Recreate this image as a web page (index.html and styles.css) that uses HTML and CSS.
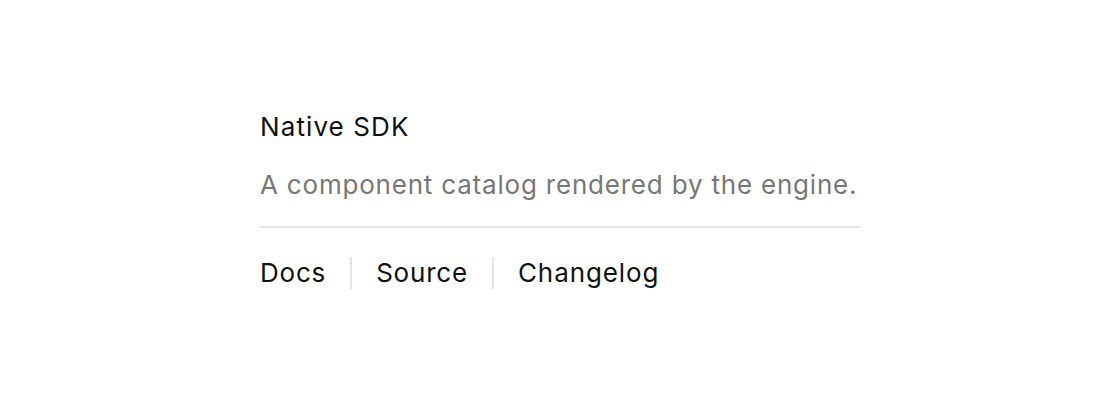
FILE: index.html
```html
<!DOCTYPE html>
<html lang="en">
<head>
    <meta charset="UTF-8">
    <meta name="viewport" content="width=device-width, initial-scale=1.0">
    <title>Native SDK</title>
    <link rel="stylesheet" href="styles.css">
</head>
<body>
    <div class="card">
        <h1 class="title">Native SDK</h1>
        <p class="subtitle">A component catalog rendered by the engine.</p>
        <nav class="links">
            <a href="#" class="link">Docs</a>
            <a href="#" class="link">Source</a>
            <a href="#" class="link">Changelog</a>
        </nav>
    </div>
</body>
</html>
```

FILE: styles.css
```css
body {
    font-family: Inter, "Noto Sans", sans-serif;
    display: flex;
    justify-content: center;
    align-items: center;
    height: 100vh;
    margin: 0;
    background-color: #fff;
    color: #111;
    letter-spacing: 0.8px;
}
.card {
    width: 600px;
}
.title {
    margin: 0;
    font-size: 26px;
    font-weight: 400;
    line-height: 32px;
    letter-spacing: 1.1px;
}
.subtitle {
    margin: 26px 0 0;
    font-size: 26px;
    line-height: 32px;
    color: #777;
    padding-bottom: 25px;
    border-bottom: 2px solid #e4e4e4;
}
.links {
    display: flex;
    margin-top: 29px;
}
.link {
    color: #111;
    text-decoration: none;
    font-size: 26px;
    line-height: 32px;
    padding: 0 24px;
    border-left: 2px solid #e4e4e4;
}
.link:first-child {
    padding-left: 0;
    border-left: none;
}
.link:last-child {
    letter-spacing: 0.9px;
}
```
